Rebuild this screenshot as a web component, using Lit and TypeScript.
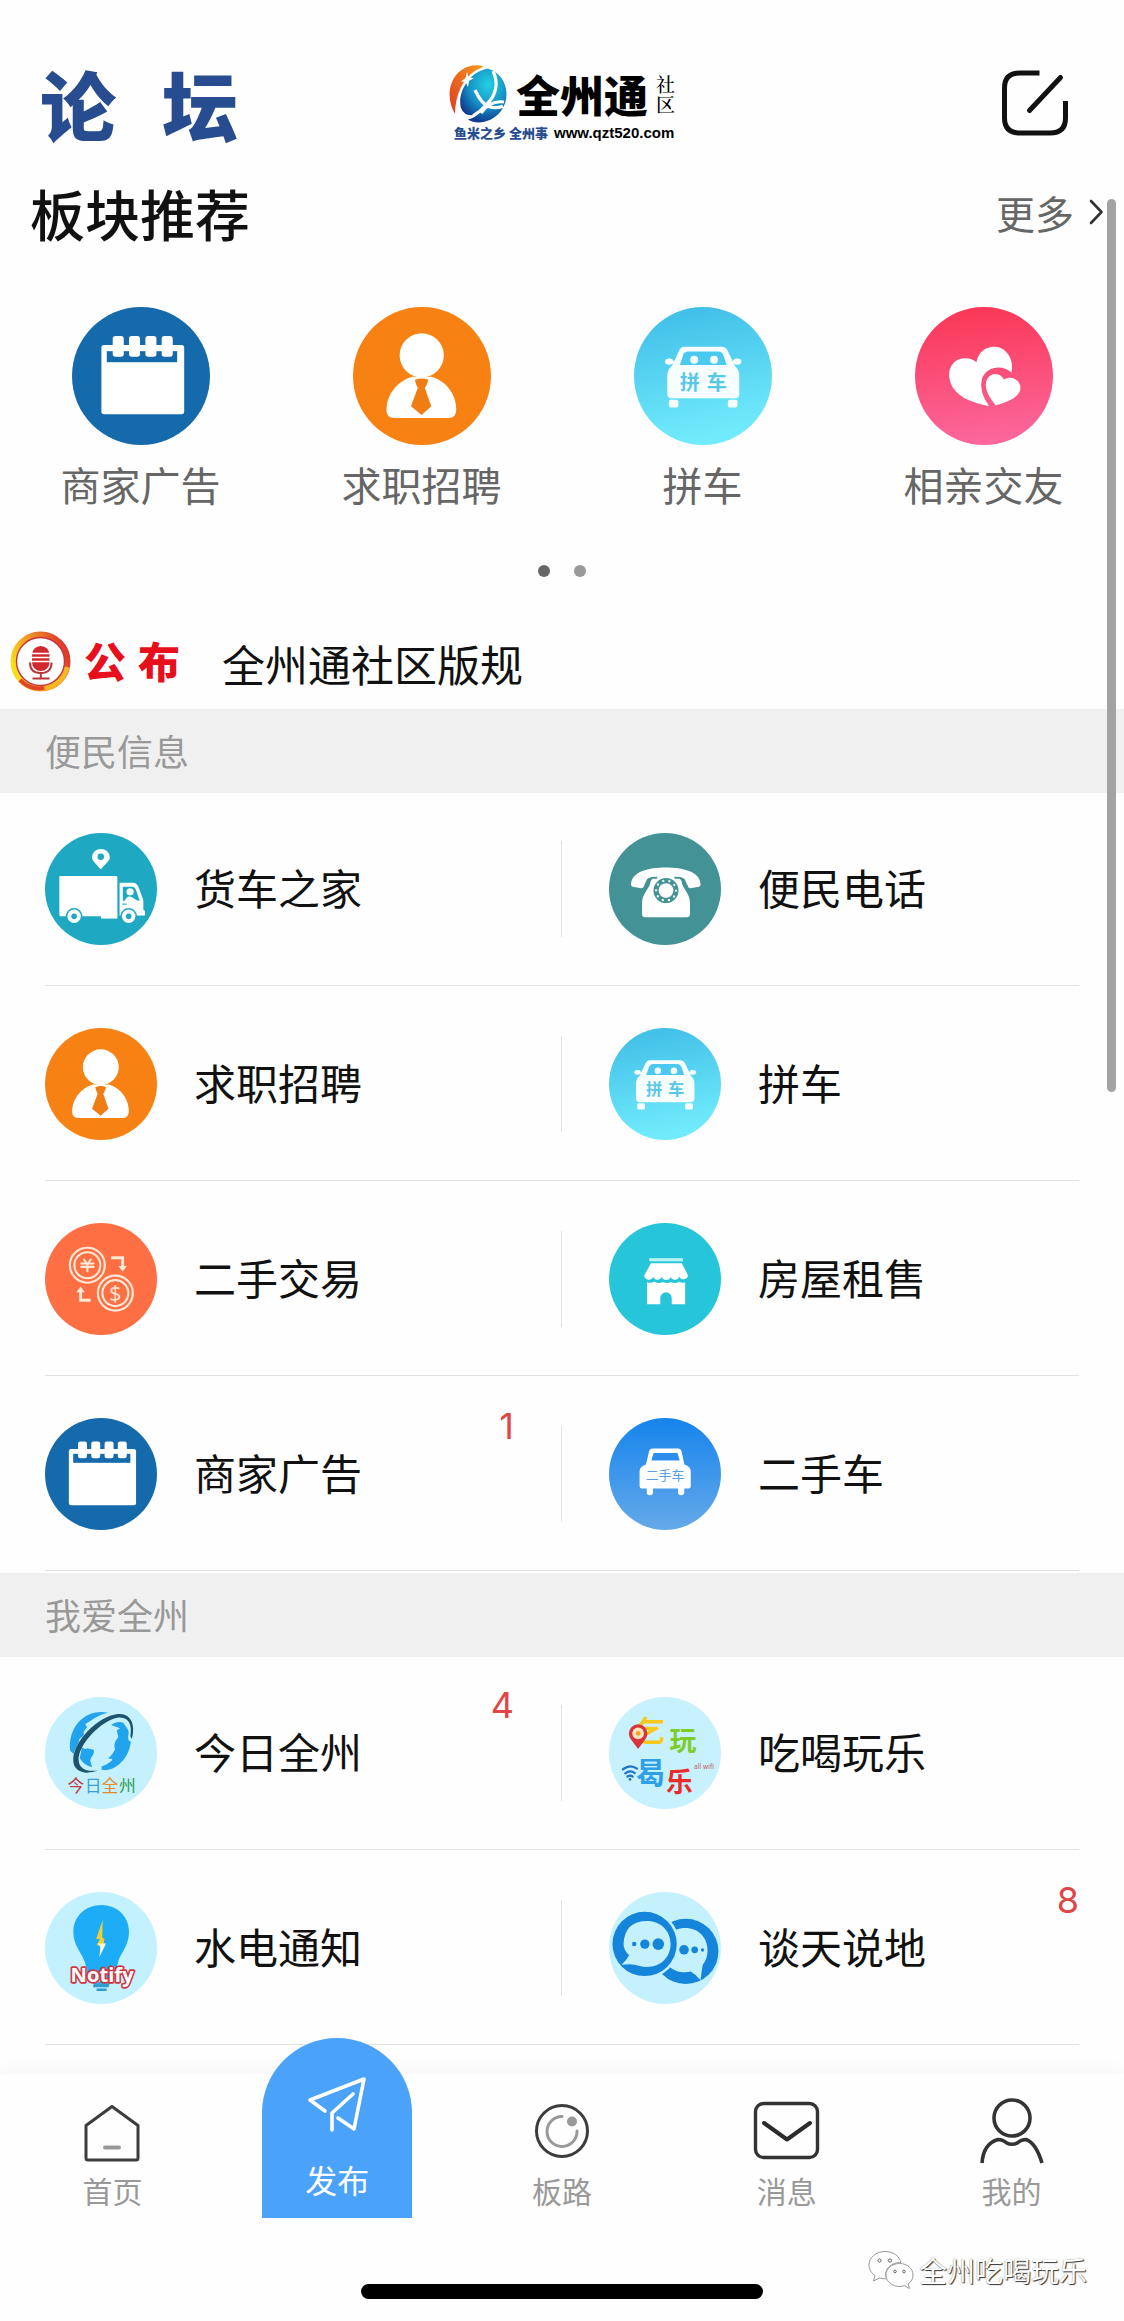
import { LitElement, html, svg, css, nothing, TemplateResult } from "lit";
import { customElement, property } from "lit/decorators.js";

/* Round forum icons, all drawn on a 100 x 100 canvas. */
const calendar = svg`
  <circle cx="50" cy="50" r="50" fill="#156aab"/>
  <rect x="21.3" y="27.6" width="60" height="50.2" rx="2" fill="#fff"/>
  <rect x="25.2" y="32" width="51" height="8" fill="#156aab"/>
  ${[29.5, 41.3, 53.2, 65].map(
    (x) => svg`<rect x=${x} y="21" width="8" height="15" rx="2" fill="#fff"/>`
  )}
  <path d="M39.4 22v5.600M51.200 22v5.600M63.100 22v5.600" stroke="#156aab" stroke-width="2.400"/>`;

const person = svg`
  <circle cx="50" cy="50" r="50" fill="#f78112"/>
  <circle cx="49.8" cy="35" r="16" fill="#fff"/>
  <path d="M43 50.5h13.6C67 53 74.8 63 74.8 74.500q0 5.900-5.500 5.900H29.800q-5.600 0-5.600-5.900C24.200 63 33 53 43 50.500z" fill="#fff"/>
  <path d="M44.800 52.800q5-2 9.800 0l-1.400 4-1.200 1.800 4.700 13.400-7 6.300-7.700-6.300 5-13.400-1-1.800z" fill="#ef7d14"/>`;

const carpool = svg`
  <defs><linearGradient id="pool" x1="0" y1="0" x2="0.200" y2="1">
    <stop offset="0" stop-color="#3dbbe6"/><stop offset="1" stop-color="#70ebfc"/>
  </linearGradient></defs>
  <circle cx="50" cy="50" r="50" fill="url(#pool)"/>
  <g fill="#f6feff">
    <path d="M36.500 28.800h27q3 0 4.500 3l5 10.700q3.300 3 3.300 7V63q0 3.200-3.300 3.200H27.400q-3.300 0-3.300-3.200V49.500q0-4 3.400-7l5-10.700q1.400-3 4-3z"/>
    <rect x="25.200" y="67.200" width="7" height="5.600" rx="1.400"/>
    <rect x="68" y="67.200" width="7" height="5.600" rx="1.400"/>
    <ellipse cx="25.500" cy="39.600" rx="3" ry="2.200"/><ellipse cx="74.800" cy="39.600" rx="3" ry="2.200"/>
    <path d="M26 39l6 3M74 39l-6 3" stroke="#f6feff" stroke-width="1.600"/>
  </g>
  <path d="M39 32.200h22q2.600 0 3.600 2.400l2.600 7.400H33.200l2.600-7.400q.9-2.400 3.200-2.400z" fill="#4cc9ee"/>
  <circle cx="43.600" cy="38.200" r="2.900" fill="#f6feff"/><circle cx="58" cy="38.200" r="2.900" fill="#f6feff"/>
  <g class="glyph" font-size="14.500" font-weight="700" fill="#58c8e6" text-anchor="middle">
    <text x="40.400" y="60">拼</text><text x="60" y="60">车</text>
  </g>`;

const hearts = svg`
  <defs><linearGradient id="love" x1="0" y1="0" x2="0.100" y2="1">
    <stop offset="0" stop-color="#fb3553"/><stop offset="1" stop-color="#fb669b"/>
  </linearGradient></defs>
  <circle cx="50" cy="50" r="50" fill="url(#love)"/>
  <path d="M53.700 72C44 69.500 33 67 27.500 58.500 21.500 48 26 37.500 36 37.200q5-.2 8.500 2.800C46 32 52 28.600 57.600 28.800 66 29 72 37.500 69.900 47.400 63 41.500 52 43 48.500 52q-2.500 9 5.200 20z" fill="#fff"/>
  <path d="M58.400 71.200C53.500 65 50 59 51.800 53.500 53.800 47.500 61 46.800 64.600 52.600 69 49.500 75 51.800 76.300 57.300 77.500 65 67 69 58.400 71.200z" fill="#fff"/>`;

const truck = svg`
  <circle cx="50" cy="50" r="50" fill="#1fa8c1"/>
  <g fill="#fff">
    <rect x="12.800" y="38.300" width="51.800" height="36" rx="1"/>
    <rect x="50" y="72" width="14.600" height="4.400"/>
    <path d="M66.600 44.500h12.200q3 0 5 4.500l4 11v8.500q1.500 0 1.500 2.500v2.600H66.600z"/>
    <path d="M49.800 32.400C45 27 42 24.500 42 21.600a7.900 7.400 0 0 1 15.800 0c0 2.900-3 5.400-8 10.800z"/>
  </g>
  <circle cx="49.800" cy="21.200" r="2.900" fill="#1fa8c1"/>
  <path d="M69.500 48h8.500q2 0 3.300 3l3.200 9.500H69.500z" fill="#1fa8c1"/>
  <circle cx="76" cy="52.500" r="3.200" fill="#fff"/>
  <path d="M71 61q2-5.500 6-4l6 3.800z" fill="#fff"/>
  <path d="M69 63.500h4" stroke="#1fa8c1" stroke-width="1"/>
  ${[26, 74.7].map(
    (x) => svg`
      <circle cx=${x} cy="74.400" r="7.500" fill="#1fa8c1"/>
      <circle cx=${x} cy="74.400" r="6" fill="#fff"/>
      <circle cx=${x} cy="74.400" r="2.500" fill="#1fa8c1"/>`
  )}`;

const phone = svg`
  <circle cx="50" cy="50" r="50" fill="#439295"/>
  <path d="M19.700 46C20 34 36 30.700 50.700 30.700S81.500 34 81.800 46q0 1.600-1.500 2l-7.500 1.300q-1.500.2-2.300-1.300l-2.700-6.400q-1-1.600-5-2.300-12-1.500-24 0-4 .7-5 2.300L31 48q-.8 1.500-2.300 1.300L21.200 48q-1.500-.4-1.500-2z" fill="#fff"/>
  <path d="M43 37.500h15.500v3.300h6.500v3c0 5 7.300 10 7.300 18.500v10.200q0 2.700-3 2.700H32.500q-3 0-3-2.700V62.300c0-8.500 7.500-13.500 7.500-18.500v-3h6z" fill="#fff"/>
  <path d="M38.500 39.800q-3.500 5.500-6.500 8.200M63.500 39.800q3.500 5.500 6.500 8.200" stroke="#439295" stroke-width="1.600" fill="none"/>
  <circle cx="50.900" cy="51.400" r="8.900" fill="none" stroke="#439295" stroke-width="4.600"/>
  <circle cx="50.900" cy="51.400" r="8.900" fill="none" stroke="#fff" stroke-width="2" stroke-linecap="round" stroke-dasharray="0.100 5.490"/>`;

const coins = svg`
  <circle cx="50" cy="50" r="50" fill="#fe7043"/>
  <g fill="none" stroke="#ffe9d6" stroke-width="1.900">
    <circle cx="37.800" cy="37.700" r="15.600"/><circle cx="37.800" cy="37.700" r="11.600"/>
    <circle cx="62.800" cy="62.600" r="15.600"/><circle cx="62.800" cy="62.600" r="11.600"/>
    <path d="M59 31h10.300v8M40.800 69H31.800v-8" stroke-width="2.600"/>
  </g>
  <path d="M65.500 38.500h7.600L69.300 43.500zM28 61.800h7.600L31.800 56.800z" fill="#ffe9d6"/>
  <g fill="none" stroke="#ffe9d6" stroke-width="1.900" stroke-linecap="round">
    <path d="M34.800 32.600l1.800 2.600M40.800 32.600L39 35.200M32.300 36.200h11M32.300 39.200h11M37.800 36.200v7"/>
  </g>
  <text class="latin" x="62.800" y="69.300" font-size="19" fill="#ffe9d6" text-anchor="middle">$</text>`;

const shop = svg`
  <circle cx="50" cy="50" r="50" fill="#27c5d9"/>
  <rect x="36" y="31.400" width="30" height="2.800" fill="#b9f3f4"/>
  <path d="M37.500 36h27.500l5.400 10.500a4 3.600 0 0 1-7.800 1.200 4 3.600 0 0 1-7.700.6 4 3.600 0 0 1-7.700 0 4 3.600 0 0 1-7.700-.6 4 3.600 0 0 1-7.900-1.200z" fill="#fff"/>
  <path d="M34 52.800q4 1.500 6.500-.6 4 2.600 7.500.4 4 2 7.500 0 3.500 2.200 7.300-.4 2 1.800 5.200.6v19.700H56V67a5.100 5.100 0 0 0-10.200 0v5.500H34z" fill="#fff"/>`;

const usedCar = svg`
  <defs><linearGradient id="used" x1="0" y1="0" x2="0" y2="1">
    <stop offset="0" stop-color="#1684ed"/><stop offset="1" stop-color="#65a9e9"/>
  </linearGradient></defs>
  <circle cx="50" cy="50" r="50" fill="url(#used)"/>
  <path d="M39 27.200h23q2.300 0 2.800 2.400L67.300 41.500q5.700 2 5.700 6V61q0 2-2 2h-3.800v3.300q0 2.700-2.800 2.700t-2.800-2.700V63H39.300v3.300q0 2.700-2.800 2.700t-2.800-2.700V63H29.300q-2 0-2-2V47.500q0-4 5.700-6l2.800-11.900q.6-2.400 3.200-2.400z" fill="#fff"/>
  <path d="M39.800 31.200h21.400l1.900 6.800H37.900z" fill="#2d8dec"/>
  <text class="glyph" x="50" y="55.600" font-size="11.500" fill="#55a0e8" text-anchor="middle">二手车</text>`;

const today = svg`
  <circle cx="50" cy="50" r="50" fill="#c5f0fd"/>
  <g fill="#22a3ee">
    <path d="M56 14C38 10 20 25 22.500 48l3 3c2-7 5-9 5-13 2-3 5-2 4-7l3-4-1.500-3q4-2 8-5 6-4 12-5z"/>
    <path d="M59 25q5-4 11-2l4 6c2 4-1 6 1 10l1.600.8c-1 12-10 24-21.500 25.500l-4.600-.3v-3q4-1 9-5 2-2-3-2 4-4 6-8-2-6 3-11l-1.500-6 3-2z"/>
    <path d="M33 45q2 2 5 1l5.500 1c1 5-3 6-3 10l1.500 5.500q-7-1-11-8z"/>
  </g>
  <path d="M77.600 37.500C81 25 77 14 65 15.200 47 17 25 40 25.200 56.500 25.500 67 36 70 47.500 65.500 38 67 30.500 65 30 56 29.500 43 50 21 64.500 18.500 75 17 78 25 76.200 35z" fill="#1d536c"/>
  <g class="glyph" font-size="15" text-anchor="middle">
    <text x="27.500" y="85" fill="#c0393f">今</text><text x="43" y="85" fill="#3c9fd6">日</text>
    <text x="58" y="85" fill="#e58a25">全</text><text x="73.500" y="85" fill="#2f9a50">州</text>
  </g>`;

const leisure = svg`
  <circle cx="50" cy="50" r="50" fill="#c7f1fd"/>
  <g class="glyph" font-weight="700">
    <text x="24" y="40" font-size="26" fill="#f8c81c">乞</text>
    <text x="54" y="48" font-size="24" fill="#7dcc2a">玩</text>
    <text x="24" y="78" font-size="26" fill="#2fa0e6">曷</text>
    <text x="51" y="85" font-size="24" fill="#ea2a2a">乐</text>
  </g>
  <path d="M26 46.500C21 39 17.800 37 17.800 32.500a8.200 8.200 0 0 1 16.400 0c0 4.500-3.200 6.500-8.200 14z" fill="#d8343a"/>
  <circle cx="26" cy="32.500" r="5.200" fill="#f7e6c0"/><circle cx="26" cy="32.500" r="2.200" fill="#f0a428"/>
  <g fill="none" stroke="#1f76c4" stroke-width="2" stroke-linecap="round">
    <path d="M12.500 64.500q6.500-5 12.500-.5M14.500 68.200q4.500-3.400 8.500-.2M16.500 71q2.300-1.600 4.600 0"/>
  </g>
  <circle cx="18.800" cy="73.600" r="1.200" fill="#1f76c4"/>
  <text class="latin" x="76" y="64" font-size="6" fill="#c9504a">all wifi</text>`;

const notify = svg`
  <circle cx="50" cy="50" r="50" fill="#c3f1fd"/>
  <path d="M50.300 11.600C64 11.600 75 21.500 75 35.500 75 47 69 53 66 60q-2 5-2 12v6H37v-6q0-7-2.500-12C31.500 53 25.300 47 25.300 35.500 25.300 21.500 36.500 11.600 50.300 11.600z" fill="#1cadf6"/>
  <path d="M42 80h17l-2 3.500H44z" fill="#35a5dc"/>
  <path d="M43 84h14M46 87.300h9" stroke="#2f9bd4" stroke-width="2.200"/>
  <path d="M51.500 25l-5.800 17h3.400l-3 5.500 6 .5 1-6.500-2-.5z" fill="#f1cf2d"/>
  <path d="M47 46h7.500L48.600 58l.8-9z" fill="#fff8d4"/>
  <text class="latin" x="51" y="80" font-size="18" font-weight="700" fill="#fff" stroke="#cf3642" stroke-width="3" paint-order="stroke" stroke-linejoin="round" text-anchor="middle">Notify</text>`;

const chat = svg`
  <circle cx="50" cy="50" r="50" fill="#c5f1fd"/>
  <circle cx="68.500" cy="53" r="29.200" fill="#1585dc"/>
  <path d="M68 32.200c12 0 20 8.500 20 20 0 5-1.700 9.500-4.300 12.800q-1.200 7-2 13.700-4-5-8.700-7.700-2.400.7-5 .7c-12 0-20-8-20-19.500s8-20 20-20z" fill="#c5f1fd"/>
  <circle cx="31.800" cy="46.400" r="31" fill="#c5f1fd"/>
  <circle cx="31.800" cy="46.400" r="28.700" fill="#1585dc"/>
  <path d="M34 26c12 0 21 8.700 21 20.500S46 67 34 67q-3.500 0-6.500-1-7-2.500-16.300-1Q16 60.500 18 56.500 13 52 13 46.500 14 26 34 26z" fill="#c5f1fd"/>
  <g fill="#1585dc">
    <circle cx="22.500" cy="46.500" r="2"/><circle cx="32" cy="46.500" r="4.200"/><circle cx="44" cy="46.500" r="5.200"/>
    <circle cx="67" cy="51.600" r="4.300"/><circle cx="76.500" cy="51.600" r="3"/><circle cx="83.500" cy="51.800" r="1.500"/>
  </g>`;

const ICONS: Record<string, TemplateResult<2>> = {
  calendar, person, carpool, hearts, truck, phone, coins, shop, usedCar, today, leisure, notify, chat,
};

const FONT = css`"Noto Sans CJK SC", "Noto Sans", sans-serif`;

@customElement("forum-icon")
export class ForumIcon extends LitElement {
  @property() name = "calendar";

  static styles = css`
    :host { display: block; }
    svg { display: block; width: 100%; height: 100%; }
    .glyph { font-family: ${FONT}; }
    .latin { font-family: "Open Sans", "Liberation Sans", sans-serif; }
  `;

  render() {
    return html`<svg viewBox="0 0 100 100" aria-hidden="true">${ICONS[this.name]}</svg>`;
  }
}

interface Forum {
  icon: string;
  label: string;
  count?: number;
}

const FEATURED: Forum[] = [
  { icon: "calendar", label: "商家广告" },
  { icon: "person", label: "求职招聘" },
  { icon: "carpool", label: "拼车" },
  { icon: "hearts", label: "相亲交友" },
];

const SECTIONS: { title: string; rows: [Forum, Forum][] }[] = [
  {
    title: "便民信息",
    rows: [
      [{ icon: "truck", label: "货车之家" }, { icon: "phone", label: "便民电话" }],
      [{ icon: "person", label: "求职招聘" }, { icon: "carpool", label: "拼车" }],
      [{ icon: "coins", label: "二手交易" }, { icon: "shop", label: "房屋租售" }],
      [{ icon: "calendar", label: "商家广告", count: 1 }, { icon: "usedCar", label: "二手车" }],
    ],
  },
  {
    title: "我爱全州",
    rows: [
      [{ icon: "today", label: "今日全州", count: 4 }, { icon: "leisure", label: "吃喝玩乐" }],
      [{ icon: "notify", label: "水电通知" }, { icon: "chat", label: "谈天说地", count: 8 }],
    ],
  },
];

/* Tab bar icons, 68 x 64. */
const TABS: { label: string; publish?: boolean; icon: TemplateResult<2> }[] = [
  {
    label: "首页",
    icon: svg`
      <path d="M8 25.500L34 6.500l26 19V58q0 2-2 2H10q-2 0-2-2z" fill="none" stroke="#3c3c3c" stroke-width="3" stroke-linejoin="round"/>
      <path d="M27 47.500h14" stroke="#999" stroke-width="4" stroke-linecap="round"/>`,
  },
  {
    label: "发布",
    publish: true,
    icon: svg`
      <path d="M22 39L7 28 61 7 51 57 35 46M50 22L29 41v17" fill="none" stroke="#fff" stroke-width="3.600" stroke-linejoin="round" stroke-linecap="round"/>`,
  },
  {
    label: "板路",
    icon: svg`
      <circle cx="34" cy="31" r="25.500" fill="none" stroke="#3c3c3c" stroke-width="3"/>
      <path d="M34 16.500A15 15 0 1 0 49 31" fill="none" stroke="#999" stroke-width="3" stroke-linecap="round"/>
      <circle cx="44" cy="21.500" r="5" fill="#999"/>`,
  },
  {
    label: "消息",
    icon: svg`
      <rect x="2.500" y="3.500" width="62" height="54" rx="8" fill="none" stroke="#333" stroke-width="3.400"/>
      <path d="M11 23l23 16.500L57 23" fill="none" stroke="#2c2c2c" stroke-width="4" stroke-linecap="round" stroke-linejoin="round"/>`,
  },
  {
    label: "我的",
    icon: svg`
      <circle cx="34" cy="18" r="18" fill="none" stroke="#333" stroke-width="3.600"/>
      <path d="M4 63C5 50 11 42 20 39.500q5 0 8.500 3.300 5.500 3 11 0Q43 39.500 48 39.500 58 43 64 63" fill="none" stroke="#333" stroke-width="3.600"/>`,
  },
];

@customElement("app-root")
export class AppRoot extends LitElement {
  static styles = css`
    :host {
      display: flex;
      flex-direction: column;
      position: relative;
      min-height: 100vh;
      background: #fefefe;
      color: #111;
      font-family: ${FONT};
      --line: #e3e3e3;
      --edge: 45px;
    }
    * { box-sizing: border-box; }
    a { color: inherit; text-decoration: none; }
    button { border: 0; padding: 0; background: none; font: inherit; color: inherit; }
    h1, h2, p { margin: 0; font-weight: inherit; }
    svg { display: block; }

    .top {
      display: grid;
      grid-template-columns: 1fr auto 1fr;
      align-items: center;
      height: 118px;
      margin-top: 44px;
    }
    .title {
      display: flex;
      gap: 46px;
      padding-left: 40px;
      color: #274c8f;
      font-size: 76px;
      line-height: 88px;
      font-weight: 900;
    }
    .compose { justify-self: end; margin-right: 54px; }

    .logo { display: flex; flex-direction: column; }
    .mark { display: flex; align-items: center; gap: 8px; color: #000; }
    .wordmark { font-size: 44px; line-height: 58px; font-weight: 900; }
    .side {
      width: 20px;
      font-family: "Noto Serif CJK SC", ${FONT};
      font-size: 19px;
      line-height: 20px;
      font-weight: 500;
    }
    .tagline { display: flex; align-items: center; gap: 6px; line-height: 18px; white-space: nowrap; }
    .motto { padding-left: 6px; color: #274c8f; font-size: 13px; font-weight: 900; }
    .site { color: #000; font-family: "Liberation Sans", sans-serif; font-size: 15px; font-weight: 700; }

    .heading {
      display: flex;
      align-items: center;
      justify-content: space-between;
      height: 104px;
      padding: 0 20px 4px 30px;
    }
    .heading h1 { font-size: 55px; line-height: 72px; font-weight: 500; }
    .more { display: flex; align-items: center; gap: 14px; color: #666; font-size: 39px; line-height: 60px; }

    .featured { display: grid; grid-template-columns: repeat(4, 1fr); padding-top: 41px; }
    .tile { display: flex; flex-direction: column; align-items: center; gap: 9px; }
    .tile forum-icon { width: 138px; height: 138px; }
    .tile span { color: #666; font-size: 40px; line-height: 60px; }

    .dots { display: flex; justify-content: center; gap: 24px; padding: 51px 0 44px; }
    .dot { width: 12px; height: 12px; border-radius: 50%; background: #999; }
    .dot.on { background: #666; }

    .notice { display: flex; align-items: center; height: 88px; padding: 0 10px; }
    .notice svg { flex: none; margin-bottom: 8px; }
    .tag { display: flex; gap: 12px; margin: 0 42px 10px 13px; color: #e60f1b; font-size: 42px; line-height: 60px; font-weight: 900; }
    .notice p { margin-bottom: 4px; font-size: 43px; line-height: 64px; }

    .bar {
      height: 84px;
      padding-left: var(--edge);
      background: #f0f0f0;
      color: #999;
      font-size: 36px;
      line-height: 82px;
    }
    .row {
      display: grid;
      grid-template-columns: 1fr 1fr;
      height: 193px;
      margin: 0 var(--edge) 2px;
      border-bottom: 1px solid var(--line);
    }
    .cell { position: relative; display: flex; align-items: center; gap: 37px; }
    .cell + .cell { padding-left: 47px; }
    .cell:first-child { padding-right: 48px; }
    .cell + .cell::before {
      content: "";
      position: absolute;
      left: -1px;
      top: 48px;
      bottom: 48px;
      width: 1px;
      background: var(--line);
    }
    .cell forum-icon { flex: none; width: 112px; height: 112px; }
    .name { margin-bottom: 5px; font-size: 42px; line-height: 64px; }
    .count {
      align-self: flex-start;
      margin-left: auto;
      color: #e04646;
      font-family: Inter, "Liberation Sans", sans-serif;
      font-size: 36px;
      line-height: 96px;
    }

    .foot {
      position: relative;
      margin-top: auto;
      background: #fefefe;
      box-shadow: 0 0 20px rgba(0, 0, 0, 0.05);
    }
    .tabs { display: grid; grid-template-columns: repeat(5, 1fr); height: 210px; padding-top: 26px; }
    .tab {
      display: flex;
      flex-direction: column;
      align-items: center;
      align-self: start;
      gap: 10px;
      color: #999;
      font-size: 30px;
      line-height: 32px;
    }
    .tab.publish {
      justify-self: center;
      width: 150px;
      height: 180px;
      margin-top: -62px;
      padding-top: 34px;
      gap: 27px;
      border-radius: 75px 75px 0 0;
      background: #4aa2f9;
      color: #fff;
      font-size: 32px;
    }
    .home { width: 402px; max-width: 60%; height: 15px; margin: 0 auto 22px; border-radius: 8px; background: #000; }

    .credit {
      position: absolute;
      right: 37px;
      bottom: 31px;
      display: flex;
      align-items: center;
      gap: 5px;
      color: #fff;
      font-size: 28px;
      line-height: 40px;
      text-shadow: 1px 1px 1px #333, 0 0 1px #777;
    }
    .scroll {
      position: absolute;
      top: 199px;
      right: 8px;
      width: 9px;
      height: 893px;
      border-radius: 5px;
      background: #a3a3a3;
    }
  `;

  private cell(f: Forum) {
    return html`<a class="cell" href="#">
      <forum-icon name=${f.icon}></forum-icon>
      <span class="name">${f.label}</span>
      ${f.count ? html`<span class="count">${f.count}</span>` : nothing}
    </a>`;
  }

  render() {
    return html`
      <header class="top">
        <div class="title"><span>论</span><span>坛</span></div>
        <div class="logo">
          <div class="mark">
            <svg width="60" height="60" viewBox="0 0 60 60" aria-hidden="true">
              <defs>
                <radialGradient id="sea" cx="0.600" cy="0.300" r="0.700">
                  <stop offset="0" stop-color="#25d0e4"/><stop offset="0.600" stop-color="#138fc4"/><stop offset="1" stop-color="#113c90"/>
                </radialGradient>
                <linearGradient id="sun" x1="1" y1="0" x2="0" y2="1">
                  <stop offset="0" stop-color="#f39a1d"/><stop offset="1" stop-color="#df3a22"/>
                </linearGradient>
              </defs>
              <path d="M7 50C-4 32 2 6 24 1.500q6-1 12 1Q20 8 13 23 7 36 7 50z" fill="url(#sun)"/>
              <path d="M40 4.500C58 10 64 32 53 47 44 59 28 61 20 55.500q5-1 9-4.500Q16 53 13 44C9 30 20 8 40 4.500z" fill="url(#sea)"/>
              <path d="M45 7c6 12 3 25-7 34Q32 48 25 52M27 26c4 9 8 15 15 17 4 1 9 1 13-1M56 38Q42 36 33 49" fill="none" stroke="#fff" stroke-width="3.200"/>
              <path d="M19 8l1.500 5.500L26 14l-5 3-1 6-2.500-5-4.500-.5 4.500-3.500z" fill="#fff"/>
            </svg>
            <span class="wordmark">全州通</span>
            <span class="side">社区</span>
          </div>
          <div class="tagline">
            <span class="motto">鱼米之乡 全州事</span><span class="site">www.qzt520.com</span>
          </div>
        </div>
        <button class="compose" aria-label="发帖">
          <svg width="70" height="70" viewBox="0 0 70 70" fill="none" stroke="#111" stroke-width="5">
            <path d="M39.500 5H20Q4.500 5 4.500 20v30Q4.500 65 20 65h30Q65.500 65 65.500 50V33"/>
            <path d="M29.500 42.500L60.500 9.500" stroke-linecap="round"/>
          </svg>
        </button>
      </header>

      <section class="heading">
        <h1>板块推荐</h1>
        <a class="more" href="#">更多
          <svg width="16" height="26" viewBox="0 0 16 26" fill="none" stroke="#333" stroke-width="2.600" stroke-linecap="round" stroke-linejoin="round">
            <path d="M3 2l10.500 11L3 24"/>
          </svg>
        </a>
      </section>

      <nav class="featured">
        ${FEATURED.map(
          (f) => html`<a class="tile" href="#"><forum-icon name=${f.icon}></forum-icon><span>${f.label}</span></a>`
        )}
      </nav>
      <div class="dots"><i class="dot on"></i><i class="dot"></i></div>

      <a class="notice" href="#">
        <svg width="61" height="61" viewBox="0 0 61 61" aria-hidden="true">
          <defs><linearGradient id="ring" x1="1" y1="0.200" x2="0" y2="0.600">
            <stop offset="0" stop-color="#dd2f2c"/><stop offset="0.500" stop-color="#f08a25"/><stop offset="1" stop-color="#f7df1e"/>
          </linearGradient></defs>
          <circle cx="30.500" cy="30.500" r="27" fill="none" stroke="url(#ring)" stroke-width="6"/>
          <path d="M10 49A27 27 0 0 0 34 57" fill="none" stroke="#e2442a" stroke-width="4"/>
          <path d="M36 57A27 27 0 0 0 57 36" fill="none" stroke="#f6b820" stroke-width="5"/>
          <circle cx="30.500" cy="30.500" r="24" fill="none" stroke="#c5353d" stroke-width="1.400"/>
          <rect x="22" y="15" width="17.500" height="25" rx="8.700" fill="#d2282f"/>
          <path d="M21 22.500h20M21 26.500h20M21 30.500h20" stroke="#fff" stroke-width="1.300"/>
          <path d="M20 31.500q0 10.500 10.800 10.500T41.500 31.500M30.800 42v5M22.500 47.500h17" fill="none" stroke="#b8333a" stroke-width="2"/>
        </svg>
        <span class="tag"><span>公</span><span>布</span></span>
        <p>全州通社区版规</p>
      </a>

      <main>
        ${SECTIONS.map(
          (s) => html`
            <h2 class="bar">${s.title}</h2>
            ${s.rows.map((r) => html`<div class="row">${r.map((f) => this.cell(f))}</div>`)}
          `
        )}
      </main>

      <footer class="foot">
        <nav class="tabs">
          ${TABS.map(
            (t) => html`<button class=${t.publish ? "tab publish" : "tab"}>
              <svg width="68" height="64" viewBox="0 0 68 64" overflow="visible" aria-hidden="true">${t.icon}</svg>
              <span>${t.label}</span>
            </button>`
          )}
        </nav>
        <div class="home"></div>
        <div class="credit">
          <svg width="46" height="40" viewBox="0 0 46 40" fill="#fff" stroke="#999" stroke-width="1" aria-hidden="true">
            <path d="M17 1.500C8 1.500 1 7.500 1 15c0 4.500 2.500 8.200 6 10.700L5.500 31l6-3q3 .8 6 .8h1C15 19 24 12 33 12.500 31.500 6 25 1.500 17 1.500z"/>
            <path d="M31.500 13.500C23.500 13.500 18 18.800 18 25s6 11.500 13.500 11.500q2.600 0 5-.8l5 2.800-1.400-4.500C43.500 31.700 45 28.600 45 25c0-6.200-5.500-11.500-13.500-11.500z"/>
            <g fill="#fff" stroke="#666"><circle cx="11.500" cy="10.500" r="1.600"/><circle cx="22" cy="10.500" r="1.600"/><circle cx="27" cy="21.500" r="1.300"/><circle cx="36" cy="21.500" r="1.300"/></g>
          </svg>
          <span>全州吃喝玩乐</span>
        </div>
      </footer>
      <div class="scroll"></div>
    `;
  }
}
